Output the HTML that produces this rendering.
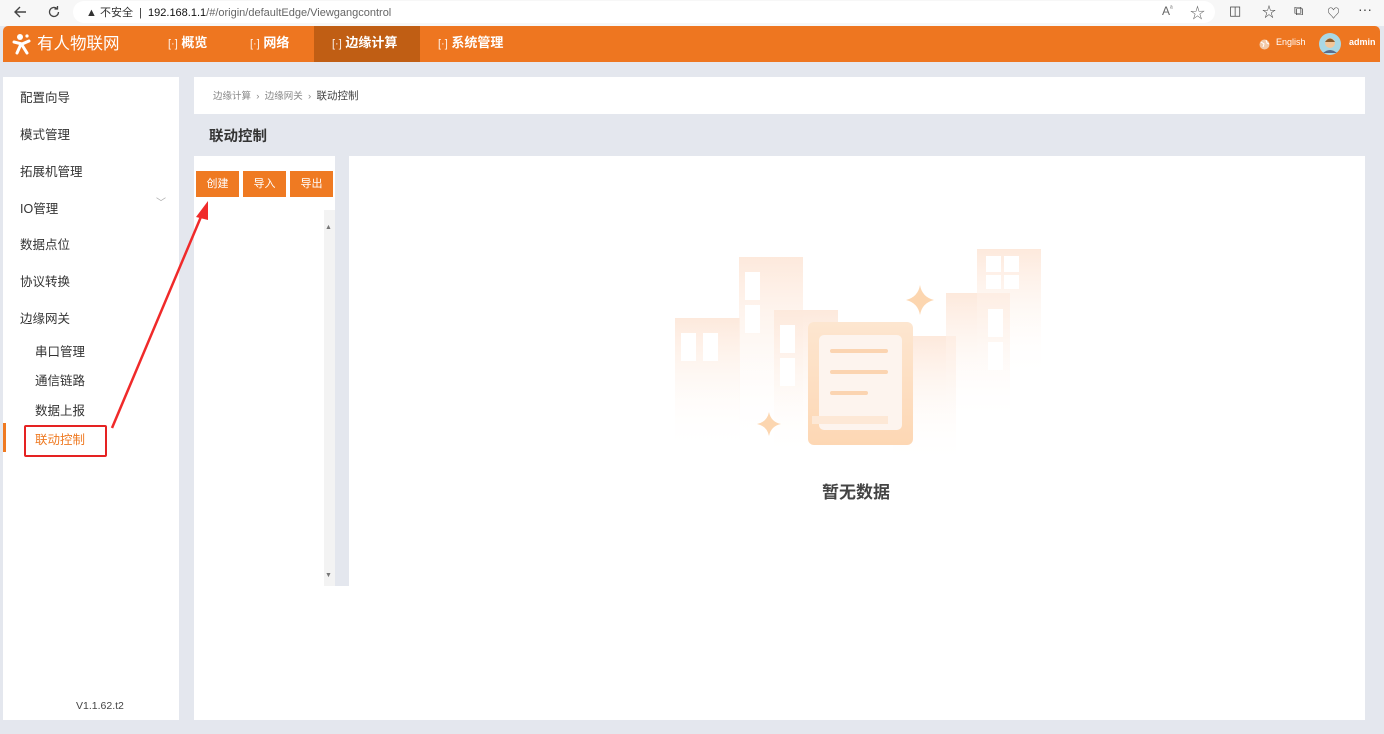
<!DOCTYPE html>
<html><head><meta charset="utf-8">
<style>
*{margin:0;padding:0;box-sizing:border-box}
body{width:1384px;height:734px;overflow:hidden;background:#e4e7ee;font-family:"Liberation Sans","Noto Sans CJK SC",sans-serif;position:relative;color:#333}
.abs{position:absolute}
.nav{font-size:13px;font-weight:bold;color:#fff;top:25px;height:36px;line-height:36px}
.nav span{font-weight:normal;font-size:11px;opacity:.9}
.side{font-size:12.5px;color:#333;left:20px}
.sub{font-size:12.5px;color:#333;left:35px}
.btn{top:171px;height:26px;line-height:26px;background:#ef7a22;color:#fff;font-size:11px;text-align:center}
</style></head><body>
<div class="abs" style="left:0;top:0;width:1384px;height:26px;background:#f7f7f7"></div>
<div class="abs" style="left:73px;top:1px;width:1142px;height:22px;background:#fff;border-radius:11px"></div>
<svg class="abs" style="left:12px;top:5px" width="16" height="14"><path d="M14 7H3M8 2L3 7l5 5" stroke="#444" stroke-width="1.4" fill="none"/></svg>
<svg class="abs" style="left:46px;top:4px" width="16" height="16"><path d="M12.5 8a4.5 4.5 0 1 1-1.5-3.4M11.5 2v3h-3" stroke="#444" stroke-width="1.3" fill="none"/></svg>
<div class="abs" style="left:86px;top:4px;font-size:11px;color:#333">▲ 不安全 &nbsp;|&nbsp; <span style="color:#111">192.168.1.1</span><span style="color:#666">/#/origin/defaultEdge/Viewgangcontrol</span></div>
<div class="abs" style="left:1162px;top:4px;font-size:12px;color:#666">A<sup style="font-size:7px">ᵃ</sup></div>
<div class="abs" style="left:1190px;top:2px;font-size:15px;color:#666">☆</div>
<div class="abs" style="left:1229px;top:3px;font-size:13px;color:#444">◫</div>
<div class="abs" style="left:1262px;top:2px;font-size:14px;color:#444">☆</div>
<div class="abs" style="left:1294px;top:3px;font-size:13px;color:#444">⧉</div>
<div class="abs" style="left:1327px;top:3px;font-size:13px;color:#444">♡</div>
<div class="abs" style="left:1358px;top:1px;font-size:14px;color:#444">···</div>
<div class="abs" style="left:3px;top:26px;width:1377px;height:36px;background:#ee7620;border-radius:5px 5px 0 0"></div>
<div class="abs" style="left:314px;top:26px;width:106px;height:36px;background:#c05e14"></div>
<svg class="abs" style="left:12px;top:33px" width="22" height="22"><circle cx="8" cy="4" r="3" fill="#fff"/><circle cx="15" cy="3" r="1.6" fill="#fff"/><path d="M2 9l8 2 7-3M9 11l-4 9M10 12l5 8" stroke="#fff" stroke-width="3" fill="none" stroke-linecap="round"/></svg>
<div class="abs" style="left:37px;top:26px;height:36px;line-height:36px;color:#fff;font-size:16.5px">有人物联网</div>
<div class="abs nav" style="left:168px"><span>[·]</span> 概览</div>
<div class="abs nav" style="left:250px"><span>[·]</span> 网络</div>
<div class="abs nav" style="left:332px"><span>[·]</span> 边缘计算</div>
<div class="abs nav" style="left:438px"><span>[·]</span> 系统管理</div>
<svg class="abs" style="left:1259px;top:39px" width="11" height="11"><circle cx="5.5" cy="5.5" r="5" fill="#f2c9a8"/><path d="M2 3l3 2-1 3M7 1l1 3 2 1" stroke="#fff" fill="none"/></svg>
<div class="abs" style="left:1276px;top:37px;font-size:9px;color:#fff">English</div>
<svg class="abs" style="left:1319px;top:33px" width="22" height="22"><circle cx="11" cy="11" r="11" fill="#a9d8e6"/><circle cx="11" cy="10" r="5" fill="#f3c79b"/><path d="M6 9q5-7 10 0" fill="#8b5a2b"/><path d="M4 20q7-6 14 0" fill="#5a6c8a"/></svg>
<div class="abs" style="left:1349px;top:37px;font-size:9px;color:#fff;font-weight:bold">admin</div>
<div class="abs" style="left:3px;top:77px;width:176px;height:643px;background:#fff"></div>
<div class="abs side" style="top:87px">配置向导</div>
<div class="abs side" style="top:124px">模式管理</div>
<div class="abs side" style="top:161px">拓展机管理</div>
<div class="abs side" style="top:198px">IO管理</div>
<div class="abs" style="left:156px;top:194px;font-size:10px;color:#aaa">﹀</div>
<div class="abs side" style="top:234px">数据点位</div>
<div class="abs side" style="top:271px">协议转换</div>
<div class="abs side" style="top:308px">边缘网关</div>
<div class="abs sub" style="top:341px">串口管理</div>
<div class="abs sub" style="top:370px">通信链路</div>
<div class="abs sub" style="top:400px">数据上报</div>
<div class="abs sub" style="top:429px;color:#ef7a22">联动控制</div>
<div class="abs" style="left:3px;top:423px;width:3px;height:29px;background:#ef7a22"></div>
<div class="abs" style="left:24px;top:425px;width:83px;height:32px;border:2px solid #e52222;border-radius:2px"></div>
<div class="abs" style="left:76px;top:700px;font-size:10.5px;color:#444">V1.1.62.t2</div>
<div class="abs" style="left:194px;top:77px;width:1171px;height:37px;background:#fff"></div>
<div class="abs" style="left:213px;top:88px;font-size:9.5px;color:#888">边缘计算 &nbsp;›&nbsp; 边缘网关 &nbsp;›&nbsp; <span style="color:#444;font-size:10.5px">联动控制</span></div>
<div class="abs" style="left:209px;top:125px;font-size:14.5px;font-weight:bold;color:#333">联动控制</div>
<div class="abs" style="left:194px;top:156px;width:1171px;height:564px;background:#fff"></div>
<div class="abs" style="left:335px;top:156px;width:14px;height:430px;background:#e4e7ee"></div>
<div class="abs" style="left:324px;top:210px;width:11px;height:376px;background:#f3f3f3"></div>
<div class="abs" style="left:325px;top:224px;font-size:7px;color:#777">▲</div>
<div class="abs" style="left:325px;top:572px;font-size:7px;color:#777">▼</div>
<div class="abs btn" style="left:196px;width:43px">创建</div>
<div class="abs btn" style="left:243px;width:43px">导入</div>
<div class="abs btn" style="left:290px;width:43px">导出</div>
<svg class="abs" style="left:100px;top:195px" width="120" height="240"><path d="M12 233L103 17" stroke="#f02a2a" stroke-width="2.5" fill="none"/><path d="M108 6L96 22l12 3z" fill="#f02a2a"/></svg>
<svg class="abs" style="left:660px;top:240px" width="400" height="240">
<defs><linearGradient id="g" x1="0" y1="0" x2="0" y2="1"><stop offset="0" stop-color="#fde9dc"/><stop offset="1" stop-color="#fff" stop-opacity="0"/></linearGradient>
<linearGradient id="d" x1="0" y1="0" x2="0" y2="1"><stop offset="0" stop-color="#fde6d0"/><stop offset="1" stop-color="#fdd7b4"/></linearGradient></defs>
<rect x="15" y="78" width="65" height="135" fill="url(#g)"/>
<rect x="79" y="17" width="64" height="190" fill="url(#g)"/>
<rect x="114" y="70" width="64" height="150" fill="url(#g)"/>
<rect x="233" y="96" width="63" height="130" fill="url(#g)"/>
<rect x="286" y="53" width="64" height="130" fill="url(#g)"/>
<rect x="317" y="9" width="64" height="130" fill="url(#g)"/>
<g fill="#fff"><rect x="21" y="93" width="15" height="28"/><rect x="43" y="93" width="15" height="28"/><rect x="85" y="32" width="15" height="28"/><rect x="85" y="65" width="15" height="28"/><rect x="120" y="85" width="15" height="28"/><rect x="120" y="118" width="15" height="28"/><rect x="326" y="16" width="15" height="16"/><rect x="344" y="16" width="15" height="16"/><rect x="326" y="35" width="15" height="14"/><rect x="344" y="35" width="15" height="14"/><rect x="328" y="69" width="15" height="28"/><rect x="328" y="102" width="15" height="28"/></g>
<rect x="148" y="82" width="105" height="123" rx="6" fill="url(#d)"/>
<rect x="159" y="95" width="83" height="95" rx="5" fill="#fdf4ee"/>
<path d="M152 176h76v8h-76z" fill="#fde8d6"/>
<g stroke="#fbd4b1" stroke-width="4" stroke-linecap="round"><path d="M172 111h54M172 132h54M172 153h34"/></g>
<path d="M260 45q2 12 14 15q-12 3-14 15q-2-12-14-15q12-3 14-15z" fill="#fcd6b0"/>
<path d="M109 172q2 10 12 12q-10 2-12 12q-2-10-12-12q10-2 12-12z" fill="#fcd6b0"/>
</svg>
<div class="abs" style="left:822px;top:478px;font-size:17px;font-weight:bold;color:#444">暂无数据</div>
</body></html>
